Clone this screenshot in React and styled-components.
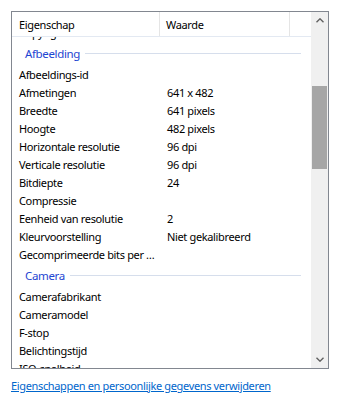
import { useLayoutEffect, useRef } from "react";
import styled, { createGlobalStyle } from "styled-components";

const GlobalStyle = createGlobalStyle`
  body {
    margin: 0;
    background: #fff;
    font-family: "Noto Sans", "Open Sans", sans-serif;
    font-size: 11px;
    letter-spacing: -0.35px;
    color: #000;
  }
`;

const Page = styled.div`
  padding: 11px 0 0 11px;
  width: 341px;
  box-sizing: border-box;
`;

const Box = styled.div`
  width: 318px;
  height: 358px;
  box-sizing: border-box;
  border: 1px solid #828790;
  display: flex;
  background: #fff;
`;

const Main = styled.div`
  width: 299px;
  display: flex;
  flex-direction: column;
  min-height: 0;
`;

const Header = styled.div`
  height: 24px;
  flex-shrink: 0;
  display: grid;
  grid-template-columns: 148px 130px 1fr;
  border-bottom: 1px solid #e3e9f2;
`;

const HeadCell = styled.div`
  display: flex;
  align-items: center;
  padding-left: ${(p) => p.$pad || 0}px;
  border-right: ${(p) => (p.$last ? "none" : "1px solid #e5e5e5")};
`;

const List = styled.div`
  flex: 1;
  overflow: hidden;
`;

const Group = styled.div`
  height: 24px;
  display: flex;
  align-items: center;
  padding: 1px 10px 0 13px;
  box-sizing: border-box;
  color: #1e46d2;
  font-size: 11.5px;
`;

const GroupLine = styled.div`
  flex: 1;
  height: 1px;
  margin-left: 5px;
  background: #d6deec;
`;

const Row = styled.div`
  height: 18px;
  display: grid;
  grid-template-columns: 149px 1fr;
  align-items: center;
`;

const Name = styled.div`
  padding-left: 7px;
  white-space: nowrap;
  overflow: hidden;
  text-overflow: ellipsis;
`;

const Value = styled.div`
  padding-left: 6px;
  white-space: nowrap;
`;

const ScrollBar = styled.div`
  width: 17px;
  background: #f0f0f0;
  display: flex;
  flex-direction: column;
`;

const Arrow = styled.div`
  height: 17px;
  display: flex;
  align-items: center;
  justify-content: center;
  color: #606060;
`;

const Track = styled.div`
  flex: 1;
  position: relative;
`;

const Thumb = styled.div`
  position: absolute;
  left: 1px;
  right: 1px;
  background: #a6a6a6;
`;

const Link = styled.a`
  display: inline-block;
  margin-top: 9px;
  color: #0066cc;
  text-decoration: underline;
  cursor: pointer;
`;

const groups = [
  { title: "Oorsprong", rows: [["Copyright", ""]] },
  {
    title: "Afbeelding",
    rows: [
      ["Afbeeldings-id", ""],
      ["Afmetingen", "641 x 482"],
      ["Breedte", "641 pixels"],
      ["Hoogte", "482 pixels"],
      ["Horizontale resolutie", "96 dpi"],
      ["Verticale resolutie", "96 dpi"],
      ["Bitdiepte", "24"],
      ["Compressie", ""],
      ["Eenheid van resolutie", "2"],
      ["Kleurvoorstelling", "Niet gekalibreerd"],
      ["Gecomprimeerde bits per pixel", ""],
    ],
  },
  {
    title: "Camera",
    rows: [
      ["Camerafabrikant", ""],
      ["Cameramodel", ""],
      ["F-stop", ""],
      ["Belichtingstijd", ""],
      ["ISO-snelheid", ""],
      ["Belichtingscorrectie", ""],
    ],
  },
];

function Chevron({ down }) {
  return (
    <svg width="8" height="5" viewBox="0 0 8 5">
      <path
        d={down ? "M0.5 0.8 L4 4.2 L7.5 0.8" : "M0.5 4.2 L4 0.8 L7.5 4.2"}
        fill="none"
        stroke="currentColor"
        strokeWidth="1.4"
      />
    </svg>
  );
}

export default function App() {
  const listRef = useRef(null);

  useLayoutEffect(() => {
    // Oorsprong header + Copyright row, scrolled so only the bottom of Copyright peeks out
    if (listRef.current) listRef.current.scrollTop = 24 + 14;
  }, []);

  return (
    <Page>
      <GlobalStyle />
      <Box>
        <Main>
          <Header>
            <HeadCell $pad={7}>Eigenschap</HeadCell>
            <HeadCell $pad={6}>Waarde</HeadCell>
            <HeadCell $last />
          </Header>
          <List ref={listRef}>
            {groups.map((g) => (
              <div key={g.title}>
                <Group>
                  {g.title}
                  <GroupLine />
                </Group>
                {g.rows.map(([n, v]) => (
                  <Row key={n}>
                    <Name>{n}</Name>
                    <Value>{v}</Value>
                  </Row>
                ))}
              </div>
            ))}
          </List>
        </Main>
        <ScrollBar>
          <Arrow>
            <Chevron />
          </Arrow>
          <Track>
            <Thumb style={{ top: 57, height: 83 }} />
          </Track>
          <Arrow>
            <Chevron down />
          </Arrow>
        </ScrollBar>
      </Box>
      <Link>Eigenschappen en persoonlijke gegevens verwijderen</Link>
    </Page>
  );
}
